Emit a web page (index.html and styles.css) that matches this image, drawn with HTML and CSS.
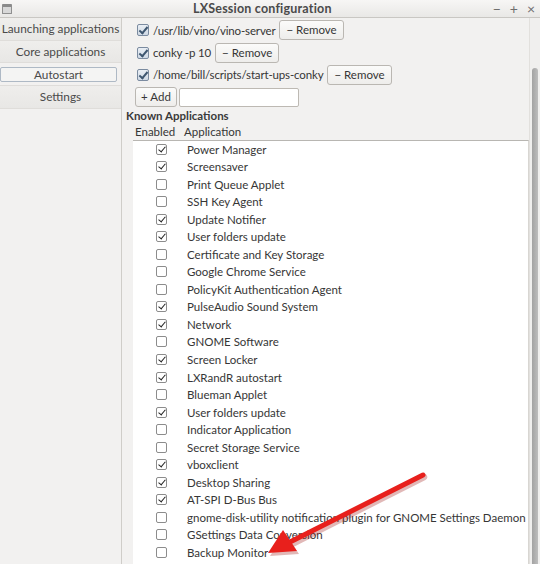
FILE: index.html
```html
<!DOCTYPE html>
<html>
<head>
<meta charset="utf-8">
<link rel="stylesheet" href="styles.css">
</head>
<body>
<div class="window">
  <div class="titlebar">
    <span class="winicon"></span>
    <span class="title">LXSession configuration</span>
    <span class="controls"><span>−</span><span>+</span><span>×</span></span>
  </div>
  <div class="main">
    <div class="sidebar">
      <div class="tab">Launching applications</div>
      <div class="tab">Core applications</div>
      <div class="tab selected"><span>Autostart</span></div>
      <div class="tab">Settings</div>
    </div>
    <div class="panel">
      <div class="content">
        <div class="arow"><span class="cb"></span><span class="atext">/usr/lib/vino/vino-server</span><button class="btn">− Remove</button></div>
        <div class="arow"><span class="cb"></span><span class="atext">conky -p 10</span><button class="btn">− Remove</button></div>
        <div class="arow"><span class="cb"></span><span class="atext">/home/bill/scripts/start-ups-conky</span><button class="btn">− Remove</button></div>
        <div class="arow addrow"><button class="btn add">+ Add</button><span class="input"></span></div>
        <div class="known">Known Applications</div>
        <div class="thead"><span class="h1">Enabled</span><span class="h2">Application</span></div>
        <div class="tree">
          <div class="trow"><span class="tcell"><span class="tcb on"></span></span>Power Manager</div>
          <div class="trow"><span class="tcell"><span class="tcb on"></span></span>Screensaver</div>
          <div class="trow"><span class="tcell"><span class="tcb"></span></span>Print Queue Applet</div>
          <div class="trow"><span class="tcell"><span class="tcb"></span></span>SSH Key Agent</div>
          <div class="trow"><span class="tcell"><span class="tcb on"></span></span>Update Notifier</div>
          <div class="trow"><span class="tcell"><span class="tcb on"></span></span>User folders update</div>
          <div class="trow"><span class="tcell"><span class="tcb"></span></span>Certificate and Key Storage</div>
          <div class="trow"><span class="tcell"><span class="tcb"></span></span>Google Chrome Service</div>
          <div class="trow"><span class="tcell"><span class="tcb"></span></span>PolicyKit Authentication Agent</div>
          <div class="trow"><span class="tcell"><span class="tcb on"></span></span>PulseAudio Sound System</div>
          <div class="trow"><span class="tcell"><span class="tcb on"></span></span>Network</div>
          <div class="trow"><span class="tcell"><span class="tcb"></span></span>GNOME Software</div>
          <div class="trow"><span class="tcell"><span class="tcb on"></span></span>Screen Locker</div>
          <div class="trow"><span class="tcell"><span class="tcb on"></span></span>LXRandR autostart</div>
          <div class="trow"><span class="tcell"><span class="tcb"></span></span>Blueman Applet</div>
          <div class="trow"><span class="tcell"><span class="tcb on"></span></span>User folders update</div>
          <div class="trow"><span class="tcell"><span class="tcb"></span></span>Indicator Application</div>
          <div class="trow"><span class="tcell"><span class="tcb"></span></span>Secret Storage Service</div>
          <div class="trow"><span class="tcell"><span class="tcb on"></span></span>vboxclient</div>
          <div class="trow"><span class="tcell"><span class="tcb on"></span></span>Desktop Sharing</div>
          <div class="trow"><span class="tcell"><span class="tcb on"></span></span>AT-SPI D-Bus Bus</div>
          <div class="trow"><span class="tcell"><span class="tcb"></span></span>gnome-disk-utility notification plugin for GNOME Settings Daemon</div>
          <div class="trow"><span class="tcell"><span class="tcb"></span></span>GSettings Data Conversion</div>
          <div class="trow"><span class="tcell"><span class="tcb"></span></span>Backup Monitor</div>
        </div>
      </div>
      <div class="scrollbar"><div class="thumb"></div></div>
    </div>
  </div>
  <svg class="arrow" width="540" height="564" viewBox="0 0 540 564">
    <line x1="424" y1="477" x2="292" y2="544" stroke="#9a1410" stroke-opacity="0.3" stroke-width="6.5" stroke-linecap="round"/>
    <polygon points="270,556 285,533 299,554" fill="#9a1410" fill-opacity="0.3"/>
    <line x1="423" y1="475" x2="290" y2="542" stroke="#e8201c" stroke-width="5" stroke-linecap="round"/>
    <polygon points="268,553 283,530 297,551" fill="#e8201c"/>
  </svg>
</div>
</body>
</html>
```
FILE: styles.css
```css
* { box-sizing: border-box; }
html, body { margin: 0; padding: 0; }
body {
  width: 540px;
  height: 564px;
  overflow: hidden;
  background: #f2f1f0;
  font-family: Lato, "Open Sans", sans-serif;
  font-size: 11.5px;
  color: #363636;
}
.window { position: relative; width: 540px; height: 564px; display: flex; flex-direction: column; overflow: hidden; }
.titlebar {
  height: 18px;
  flex: none;
  display: flex;
  align-items: center;
  background: linear-gradient(#f7f6f5, #e9e8e6);
  border-bottom: 1px solid #c9c7c3;
}
.winicon {
  width: 10px; height: 10px;
  margin-left: 2px;
  border: 1px solid #8f8f8f;
  border-top: 3px solid #8a8a8a;
  background: #d8d8d8;
  border-radius: 1px;
}
.title {
  flex: 1;
  text-align: center;
  font-weight: bold;
  font-size: 12.5px;
  color: #4a4a4a;
  letter-spacing: 0.2px;
  margin-left: 20px;
}
.controls { display: flex; gap: 9px; margin-right: 5px; color: #6e6e6e; font-size: 14px; line-height: 1; }
.main { flex: 1; display: flex; min-height: 0; }
.sidebar {
  width: 122px;
  flex: none;
  border-right: 1px solid #cfcdc9;
  background: #f2f1f0;
}
.tab {
  height: 22.7px;
  display: flex;
  align-items: center;
  justify-content: center;
  background: linear-gradient(#efeeec, #e8e7e5);
  border-bottom: 1px solid #dfddda;
  color: #4a4a4a;
  white-space: nowrap;
  font-size: 11.8px;
}
.tab.selected { background: #f2f1f0; padding: 0 2px 0 0; }
.tab.selected span {
  display: flex; align-items: center; justify-content: center;
  width: 118px; height: 15px; margin-right: 2px;
  border: 1px solid #aeb9c5;
  background: #f4f4f3;
  border-radius: 2px;
}
.panel { flex: 1; display: flex; min-width: 0; }
.content { flex: 1; padding: 1px 0 0 13px; min-width: 0; }
.arow { height: 22.4px; display: flex; align-items: center; white-space: nowrap; }
.cb {
  flex: none;
  width: 12px; height: 12px;
  margin-left: 2px; margin-right: 4px;
  border: 1px solid #7b8ba0;
  border-radius: 2px;
  background: linear-gradient(#e9eef4, #cfd9e5);
  position: relative;
}
.cb::after {
  content: "";
  position: absolute;
  left: 3px; top: 0px;
  width: 3px; height: 7px;
  border-right: 2px solid #3e5670;
  border-bottom: 2px solid #3e5670;
  transform: rotate(40deg);
}
.atext { margin-right: 4px; letter-spacing: -0.15px; }
.btn {
  flex: none;
  height: 20px;
  padding: 0 6px;
  border: 1px solid #bab7b2;
  border-radius: 3px;
  background: linear-gradient(#fbfbfa, #eeedeb);
  font-family: inherit;
  font-size: 11.5px;
  color: #363636;
  line-height: 18px;
  white-space: nowrap;
}
.add { padding: 0 5px; width: 42px; }
.input {
  flex: none;
  width: 120px; height: 19px;
  margin-left: 2px;
  background: #fff;
  border: 1px solid #bdb9b3;
  border-radius: 2px;
}
.known { font-weight: bold; height: 15px; line-height: 15px; margin-left: -9px; margin-top: -1px; color: #3a3a3a; }
.thead { height: 17px; display: flex; align-items: center; }
.h1 { width: 49px; }
.tree {
  margin-left: -2px;
  background: #fff;
  border-top: 1px solid #b8b6b2;
  border-right: 1px solid #d8d6d2;
  padding-top: 0;
  height: 500px;
}
.trow { height: 17.52px; display: flex; align-items: center; white-space: nowrap; }
.tcell { flex: none; width: 54px; display: flex; justify-content: center; padding-left: 3px; }
.tcb {
  width: 11px; height: 11px;
  border: 1px solid #8c8c8c;
  border-radius: 2px;
  background: #fff;
  position: relative;
}
.tcb.on::after {
  content: "";
  position: absolute;
  left: 3px; top: 0px;
  width: 3px; height: 6px;
  border-right: 1.5px solid #222;
  border-bottom: 1.5px solid #222;
  transform: rotate(40deg);
}
.scrollbar {
  width: 11px; flex: none;
  background: #f0efee;
  border-left: 1px solid #e2e0dd;
  padding-top: 50px;
  display: flex; justify-content: center;
}
.thumb {
  width: 6px; height: 500px;
  border-radius: 3px;
  background: linear-gradient(90deg, #a3a3a3, #bdbdbd);
}
.arrow { position: absolute; left: 0; top: 0; pointer-events: none; }
```
